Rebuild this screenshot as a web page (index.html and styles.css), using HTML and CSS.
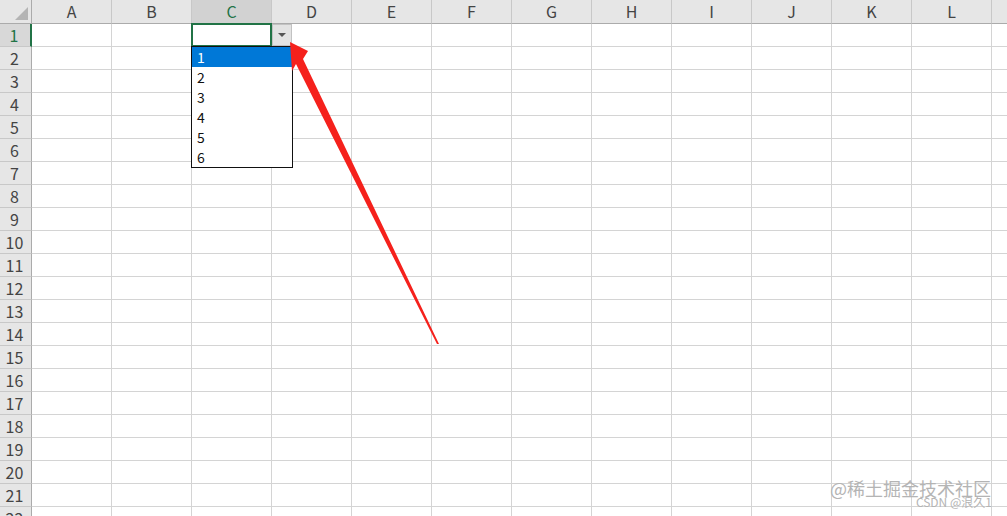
FILE: index.html
```html
<!DOCTYPE html>
<html>
<head>
  <title>Sheet1</title>
  <meta name="viewport" content="width=device-width, initial-scale=1">
  <link rel="stylesheet" href="styles.css">
</head>
<body>
  <div class="sheet">
    <div class="grid" id="grid"></div>

    <!-- dropdown for C1 -->
    <div class="dd-button"><span class="tri"></span></div>
    <ul class="dd-list">
      <li class="active">1</li>
      <li>2</li>
      <li>3</li>
      <li>4</li>
      <li>5</li>
      <li>6</li>
    </ul>

    <svg class="arrow" width="1007" height="516" viewBox="0 0 1007 516">
      <polygon points="290,42 308,51 303,59 439,344 437,344 296,64 292,71" fill="#f5211c"/>
    </svg>

    <div class="mark">
      <span class="mark-big">@稀土掘金技术社区</span>
      <span class="mark-small">CSDN @浪久1</span>
    </div>
  </div>

  <script>
    const grid = document.getElementById('grid');
    const cols = ['A','B','C','D','E','F','G','H','I','J','K','L',''];

    // header row
    let corner = document.createElement('div');
    corner.className = 'corner';
    grid.appendChild(corner);
    cols.forEach(function(c) {
      let h = document.createElement('div');
      h.className = 'col-head' + (c == 'C' ? ' sel' : '');
      h.textContent = c;
      grid.appendChild(h);
    });

    // body rows
    for (let r = 1; r <= 22; r++) {
      let rh = document.createElement('div');
      rh.className = 'row-head' + (r == 1 ? ' sel' : '');
      rh.textContent = r;
      grid.appendChild(rh);
      cols.forEach(function(c) {
        let cell = document.createElement('div');
        cell.className = 'cell' + (r == 1 && c == 'C' ? ' current' : '');
        grid.appendChild(cell);
      });
    }
  </script>
</body>
</html>
```

FILE: styles.css
```css
html, body {
  margin: 0;
  padding: 0;
  overflow: hidden;
  background: #fff;
}
.sheet {
  position: relative;
  width: 1007px;
  height: 516px;
  overflow: hidden;
  font-family: "Noto Sans CJK SC", "Noto Sans", sans-serif;
}
/* Grid of cells */
.grid {
  display: grid;
  grid-template-columns: 32px repeat(13, 80px);
  grid-template-rows: 24px;
  grid-auto-rows: 23px;
}
.grid > div {
  box-sizing: border-box;
  border-right: 1px solid #d4d4d4;
  border-bottom: 1px solid #d4d4d4;
}
.corner {
  background: #e6e6e6;
  position: relative;
  border-right: 1px solid #ababab !important;
  border-bottom: 1px solid #ababab !important;
}
.corner::after {
  content: "";
  position: absolute;
  right: 3px;
  bottom: 3px;
  border-left: 13px solid transparent;
  border-bottom: 13px solid #b4b4b4;
}
.col-head {
  background: #e6e6e6;
  color: #444;
  font-size: 16px;
  line-height: 23px;
  text-align: center;
  border-right: 1px solid #c8c8c8 !important;
  border-bottom: 1px solid #ababab !important;
}
.col-head.sel {
  background: #d2d2d2;
  color: #217346;
}
.row-head {
  background: #e6e6e6;
  color: #444;
  font-size: 16px;
  line-height: 23px;
  text-align: center;
  padding-right: 2px;
  border-right: 1px solid #ababab !important;
  border-bottom: 1px solid #c8c8c8 !important;
}
.row-head.sel {
  background: #d8d8d8;
  color: #217346;
  border-right: 2px solid #217346 !important;
}
.cell.current {
  border: 2px solid #217346 !important;
  margin: -1px 0 0 -1px;
  width: 81px;
  height: 24px;
}
/* Dropdown button and list */
.dd-button {
  position: absolute;
  left: 272px;
  top: 24px;
  width: 20px;
  height: 22px;
  box-sizing: border-box;
  background: #e3e3e3;
  border: 1px solid #c2c2c2;
  display: flex;
  align-items: center;
  justify-content: center;
}
.tri {
  border-left: 4px solid transparent;
  border-right: 4px solid transparent;
  border-top: 4px solid #555;
}
.dd-list {
  position: absolute;
  left: 191px;
  top: 46px;
  width: 102px;
  height: 122px;
  box-sizing: border-box;
  margin: 0;
  padding: 0;
  list-style: none;
  background: #fff;
  border: 1px solid #111;
}
.dd-list li {
  height: 20px;
  line-height: 20px;
  padding-left: 5px;
  font-size: 14px;
  color: #111;
}
.dd-list li.active {
  background: #0078d7;
  color: #fff;
}
.arrow {
  position: absolute;
  left: 0;
  top: 0;
  pointer-events: none;
}
/* watermark */
.mark {
  position: absolute;
  right: 16px;
  bottom: 8px;
  display: flex;
  flex-direction: column;
  align-items: flex-end;
  color: #b4b4b4;
  line-height: 1;
}
.mark-big {
  font-size: 18px;
}
.mark-small {
  font-size: 12px;
  margin-top: -1px;
  margin-right: -1px;
}
```
